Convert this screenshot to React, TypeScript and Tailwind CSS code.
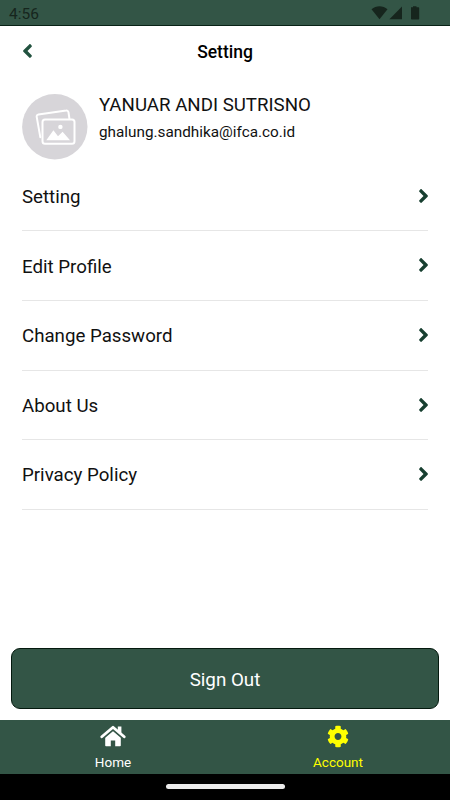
import { useState } from 'react';
import { FaAngleLeft, FaAngleRight, FaCog } from 'react-icons/fa';

const menuItems = ['Setting', 'Edit Profile', 'Change Password', 'About Us', 'Privacy Policy'];

function HomeIcon() {
  return (
    <svg width="26" height="23" viewBox="0 0 26 23" fill="currentColor">
      <path d="M17.8 1.4H21.4V10.5L17.8 7Z" />
      <path d="M5.2 12L13 5.6L20.8 12V20.4a0.8 0.8 0 0 1-0.8 0.8H15.2V15.4H10.8V21.2H6a0.8 0.8 0 0 1-0.8-0.8Z" />
      <path d="M3.5 13.2L13 5.1L22.5 13.2" fill="none" stroke="#335546" strokeWidth="1.6" />
      <path d="M1.8 11.8L13 2.3L24.2 11.8" fill="none" stroke="currentColor" strokeWidth="2.8" strokeLinecap="round" strokeLinejoin="round" />
    </svg>
  );
}

function AccountIcon() {
  return <FaCog size={22} className="h-[23px]" />;
}

const tabs = [
  { name: 'Home', icon: HomeIcon },
  { name: 'Account', icon: AccountIcon },
];

function StatusBar() {
  return (
    <div className="h-[26px] shrink-0 flex items-center justify-between bg-[#335546] border-b border-[#082216] pl-[9px] pr-[30px] text-[#16251d]">
      <span className="text-[15.5px] leading-none pt-[4px]">4:56</span>
      <svg width="49" height="14" viewBox="0 0 49 14" className="mt-px" fill="#16251d">
        <path d="M0.5 3.3C5-0.9 12-0.9 16.5 3.3L8.5 13.2Z" />
        <path d="M31 0.5V13.3H18.4Z" />
        <path d="M40 1.2h2V0.2h3.5v1h2a0.7 0.7 0 0 1 0.7 0.7v10.8a0.7 0.7 0 0 1-0.7 0.7h-6.8a0.7 0.7 0 0 1-0.7-0.7z" />
      </svg>
    </div>
  );
}

function Avatar() {
  return (
    <svg width="66" height="66" viewBox="0 0 66 66" fill="none" className="shrink-0">
      <circle cx="32.8" cy="32.7" r="32.7" fill="#d7d5d9" />
      <g stroke="#fff" strokeWidth="2" strokeLinejoin="round" strokeLinecap="round">
        <path d="M18.3 43.2L14.7 22.8a2 2 0 0 1 1.7-2.4L44.2 16.6a2 2 0 0 1 2.3 1.7L47.4 24.5" />
        <rect x="20.5" y="25.6" width="32" height="24.2" rx="2.5" />
      </g>
      <circle cx="38.4" cy="32.9" r="2.2" fill="#fff" />
      <path d="M24.3 46.2L31.4 36.2L36 42.3L40.6 37.8L48 46.2Z" fill="#fff" />
    </svg>
  );
}

export default function App() {
  const [activeTab, setActiveTab] = useState('Account');

  return (
    <div className="w-full h-screen flex flex-col overflow-hidden bg-white text-[#111] font-[Roboto,sans-serif]">
      <StatusBar />

      <header className="h-[52px] shrink-0 grid grid-cols-[1fr_auto_1fr] items-center px-[22px]">
        <button aria-label="Back" className="justify-self-start text-[#22523f]">
          <FaAngleLeft size={22} className="w-[11px] -mt-[2px]" />
        </button>
        <h1 className="text-[17.5px] font-medium leading-none pt-[2px] text-black">Setting</h1>
      </header>

      <main className="flex-1 px-[22px] pt-4">
        <div className="flex gap-[11px]">
          <Avatar />
          <div>
            <p className="text-[18.7px] leading-[23px]">YANUAR ANDI SUTRISNO</p>
            <p className="text-[15.3px] leading-5 mt-[5px]">ghalung.sandhika@ifca.co.id</p>
          </div>
        </div>

        <ul className="mt-[1.8px]">
          {menuItems.map((item) => (
            <li key={item} className="h-[69.6px] border-b border-[#e6e6e6]">
              <button className="w-full h-[69px] flex items-center justify-between text-left">
                <span className="text-[18.7px] leading-none pt-[2px]">{item}</span>
                <FaAngleRight size={22} className="w-[11px] -mr-px -mt-px text-[#173f30]" />
              </button>
            </li>
          ))}
        </ul>
      </main>

      <div className="px-[11px] pb-[11px]">
        <button className="w-full h-[61px] rounded-[9px] border border-[#04190e] bg-[#335546] pt-[3px] text-[18.8px] text-white">
          Sign Out
        </button>
      </div>

      <nav className="h-[54px] shrink-0 grid grid-cols-2 bg-[#335546]">
        {tabs.map(({ name, icon: Icon }) => (
          <button
            key={name}
            onClick={() => setActiveTab(name)}
            className={`flex flex-col items-center pt-[5px] ${activeTab === name ? 'text-[#ffff00]' : 'text-white'}`}
          >
            <Icon />
            <span className="text-[13.5px] leading-4 mt-[6px] pl-px">{name}</span>
          </button>
        ))}
      </nav>

      <div className="h-[26px] shrink-0 bg-black flex justify-center pt-[10px]">
        <div className="w-[119px] h-[5px] rounded-full bg-[#ececec]" />
      </div>
    </div>
  );
}
